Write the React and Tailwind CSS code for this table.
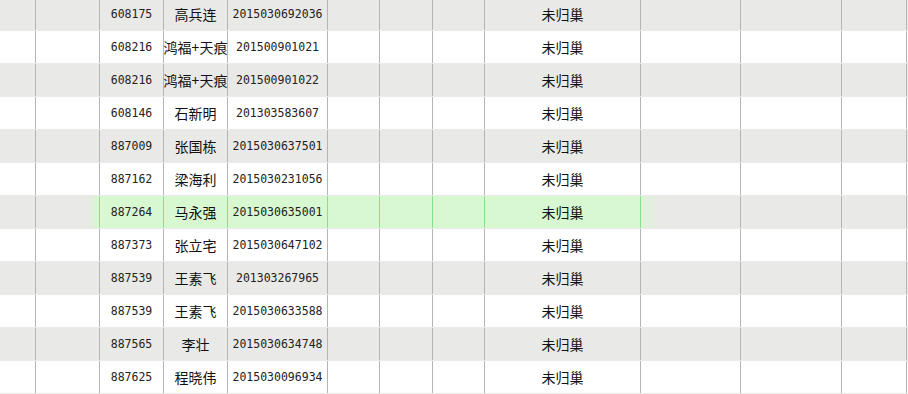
import React from 'react'

const rows = [
  ['608175', '高兵连', '2015030692036'],
  ['608216', '鸿福+天痕', '201500901021'],
  ['608216', '鸿福+天痕', '201500901022'],
  ['608146', '石新明', '201303583607'],
  ['887009', '张国栋', '2015030637501'],
  ['887162', '梁海利', '2015030231056'],
  ['887264', '马永强', '2015030635001'],
  ['887373', '张立宅', '2015030647102'],
  ['887539', '王素飞', '201303267965'],
  ['887539', '王素飞', '2015030633588'],
  ['887565', '李壮', '2015030634748'],
  ['887625', '程晓伟', '2015030096934'],
]

const num = "pt-[2px] font-['DejaVu_Sans_Mono',monospace] text-[11.5px] text-[#222]"
const cjk = "font-['Noto_Sans_CJK_SC',sans-serif] text-[14px]"

function Row({ id, name, card, i }) {
  const on = i === 6
  const line = on ? 'border-[#86e086]' : 'border-[#b5b5b5]'
  const cell = `h-full shrink-0 border-r flex items-center justify-center ${line}`
  return (
    <div className={`relative flex h-[33px] border-b border-[#e9e9e7] ${i % 2 === 0 ? 'bg-[#e9e9e7]' : 'bg-white'}`}>
      {on && (
        <div className="absolute left-[86px] top-0 h-[32px] w-[574px] bg-[linear-gradient(to_right,rgba(215,248,208,0)_0px,#d7f8d0_14px,#d7f8d0_calc(100%-26px),rgba(215,248,208,0)_100%)]" />
      )}
      <div className="relative flex h-full w-full text-[#111]">
        <div className="h-full w-[36px] shrink-0 border-r border-[#b5b5b5]" />
        <div className={`${cell} w-[64px]`} />
        <div className={`${cell} w-[64px] ${num}`}>{id}</div>
        <div className={`${cell} w-[64px] ${cjk} whitespace-nowrap`}>{name}</div>
        <div className={`${cell} w-[100px] ${num}`}>{card}</div>
        <div className={`${cell} w-[52px]`} />
        <div className={`${cell} w-[53px]`} />
        <div className={`${cell} w-[52px]`} />
        <div className={`${cell} w-[156px] ${cjk}`}>未归巢</div>
        <div className="h-full w-[100px] shrink-0 border-r border-[#b5b5b5]" />
        <div className="h-full w-[101px] shrink-0 border-r border-[#b5b5b5]" />
        <div className="h-full w-[65px] shrink-0 border-r border-[#b5b5b5]" />
        <div className="h-full flex-1" />
      </div>
    </div>
  )
}

export default function App() {
  return (
    <div className="h-[394px] w-[908px] overflow-hidden bg-white">
      <div className="-mt-[2px]">
        {rows.map((r, i) => (
          <Row key={i} i={i} id={r[0]} name={r[1]} card={r[2]} />
        ))}
      </div>
    </div>
  )
}
